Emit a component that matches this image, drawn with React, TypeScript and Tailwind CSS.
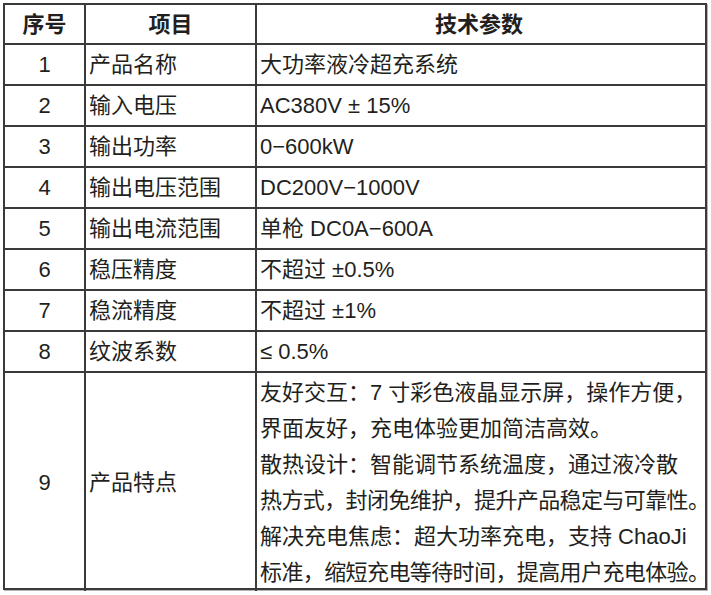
const ROWS: [string, string, string][] = [
  ["1", "产品名称", "大功率液冷超充系统"],
  ["2", "输入电压", "AC380V ± 15%"],
  ["3", "输出功率", "0−600kW"],
  ["4", "输出电压范围", "DC200V−1000V"],
  ["5", "输出电流范围", "单枪 DC0A−600A"],
  ["6", "稳压精度", "不超过 ±0.5%"],
  ["7", "稳流精度", "不超过 ±1%"],
  ["8", "纹波系数", "≤ 0.5%"],
];

// tight = the lines that are set narrower in the print
const FEATURES: [string, boolean][] = [
  ["友好交互：7 寸彩色液晶显示屏，操作方便，", false],
  ["界面友好，充电体验更加简洁高效。", false],
  ["散热设计：智能调节系统温度，通过液冷散", false],
  ["热方式，封闭免维护，提升产品稳定与可靠性。", true],
  ["解决充电焦虑：超大功率充电，支持 ChaoJi", false],
  ["标准，缩短充电等待时间，提高用户充电体验。", true],
];

const COLS = "grid grid-cols-[79px_171px_446px]";

export default function App() {
  return (
    <div
      className="w-[711px] h-[595px] bg-white pt-[3px] pl-[3px] text-[#231f20]"
      style={{ fontFamily: '"Liberation Sans", "Noto Sans CJK SC", sans-serif' }}
    >
      <div className="w-[704px] border-2 border-[#3a3a3a] shadow-[1px_1px_0_#b5b5b5]">
        <div className={`${COLS} h-[38px] text-[22px] font-bold items-center`}>
          <div className="text-center">序号</div>
          <div className="border-l-2 border-[#3a3a3a] h-full flex items-center justify-center">项目</div>
          <div className="border-l-2 border-[#3a3a3a] h-full flex items-center justify-center">技术参数</div>
        </div>
        {ROWS.map(([n, item, val]) => (
          <div key={n} className={`${COLS} h-[41px] border-t-2 border-[#3a3a3a] text-[22px]`}>
            <div className="flex items-center justify-center">{n}</div>
            <div className="flex items-center pl-[3px] border-l-2 border-[#3a3a3a] whitespace-nowrap">{item}</div>
            <div className="flex items-center pl-[3px] border-l-2 border-[#3a3a3a] whitespace-nowrap">{val}</div>
          </div>
        ))}
        <div className={`${COLS} h-[217px] border-t-2 border-[#3a3a3a] text-[22px]`}>
          <div className="flex items-center justify-center">9</div>
          <div className="flex items-center pl-[3px] border-l-2 border-[#3a3a3a]">产品特点</div>
          <div className="pl-[3px] pt-[2px] border-l-2 border-[#3a3a3a] leading-[36px] whitespace-nowrap">
            {FEATURES.map(([l, tight]) => (
              <div key={l} className={tight ? "tracking-[-0.6px]" : ""}>{l}</div>
            ))}
          </div>
        </div>
      </div>
    </div>
  );
}
